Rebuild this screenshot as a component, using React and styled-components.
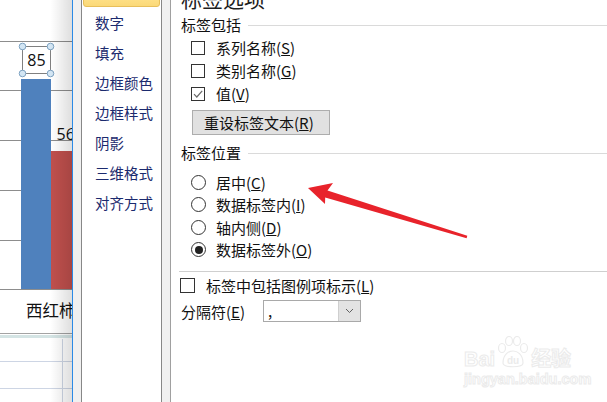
import React from "react";
import styled, { createGlobalStyle } from "styled-components";

const GlobalStyle = createGlobalStyle`
  html, body {
    margin: 0;
    padding: 0;
    overflow: hidden;
    background: #ffffff;
  }
  body {
    font-family: "Noto Sans CJK SC", "Noto Sans", sans-serif;
  }
`;

const categories = ["数字", "填充", "边框颜色", "边框样式", "阴影", "三维格式", "对齐方式"];

const positions = [
  { text: "居中", key: "C", checked: false },
  { text: "数据标签内", key: "I", checked: false },
  { text: "轴内侧", key: "D", checked: false },
  { text: "数据标签外", key: "O", checked: true },
];

function Label({ text, hotkey }) {
  return (
    <span>
      {text}({<Hot>{hotkey}</Hot>})
    </span>
  );
}

function ChartDrawing() {
  const grid = [41.5, 90.5, 140.5, 190.5, 240.5];
  const handles = [
    [22.5, 46.5],
    [50.5, 46.5],
    [22.5, 73.5],
    [50.5, 73.5],
  ];
  return (
    <svg width="72" height="333" viewBox="0 0 72 333">
      {grid.map((y) => (
        <line key={y} x1="0" x2="72" y1={y} y2={y} stroke="#8d8d8d" strokeWidth="1" />
      ))}
      <rect x="21" y="79" width="30" height="210" fill="#4f81bd" />
      <rect x="51" y="151" width="21" height="138" fill="#c0504d" />
      <line x1="0" x2="72" y1="289.5" y2="289.5" stroke="#8d8d8d" strokeWidth="1" />
      <rect x="22.5" y="46.5" width="28" height="27" fill="#ffffff" stroke="#808080" />
      <text x="36.5" y="66" textAnchor="middle" fontSize="16" fontFamily="Open Sans, sans-serif" fill="#111">
        85
      </text>
      {handles.map(([cx, cy]) => (
        <circle key={cx + "-" + cy} cx={cx} cy={cy} r="3.3" fill="#d3e6f4" stroke="#7ea3c2" strokeWidth="1" />
      ))}
      <text x="56.5" y="140" fontSize="16" fontFamily="Open Sans, sans-serif" fill="#111">
        56
      </text>
      <text x="26" y="317" fontSize="16.5" fontFamily="Noto Sans CJK SC, sans-serif" fill="#111">
        西红柿
      </text>
    </svg>
  );
}

export default function App() {
  return (
    <>
      <GlobalStyle />
      <Page>
        <ChartColumn>
          <ChartDrawing />
          <Sheet />
        </ChartColumn>
        <DialogEdge />
        <Gutter />
        <CategoryList>
          <Category $selected />
          {categories.map((c) => (
            <Category key={c}>{c}</Category>
          ))}
        </CategoryList>
        <Gutter />
        <OptionsPanel>
          <Title>标签选项</Title>

          <Heading $top={5}>标签包括</Heading>
          <CheckRow $top={1}>
            <Box />
            <Label text="系列名称" hotkey="S" />
          </CheckRow>
          <CheckRow>
            <Box />
            <Label text="类别名称" hotkey="G" />
          </CheckRow>
          <CheckRow>
            <Box>
              <svg width="12" height="12" viewBox="0 0 12 12">
                <path d="M2 6.2 L4.8 9 L10.2 2.8" fill="none" stroke="#6b6b6b" strokeWidth="1.2" />
              </svg>
            </Box>
            <Label text="值" hotkey="V" />
          </CheckRow>
          <ResetButton>
            <Label text="重设标签文本" hotkey="R" />
          </ResetButton>

          <Heading $top={8}>标签位置</Heading>
          <RadioGroup>
            {positions.map((p) => (
              <RadioRow key={p.key}>
                <Radio $checked={p.checked} />
                <Label text={p.text} hotkey={p.key} />
              </RadioRow>
            ))}
          </RadioGroup>

          <Divider />
          <LegendRow>
            <Box />
            <Label text="标签中包括图例项标示" hotkey="L" />
          </LegendRow>
          <SeparatorRow>
            <FieldLabel>
              <Label text="分隔符" hotkey="E" />
            </FieldLabel>
            <Select>
              <SelectValue>,</SelectValue>
              <SelectButton>
                <svg width="9" height="6" viewBox="0 0 9 6">
                  <path d="M1 1 L4.5 4.5 L8 1" fill="none" stroke="#606060" strokeWidth="1" />
                </svg>
              </SelectButton>
            </Select>
          </SeparatorRow>
        </OptionsPanel>

        <Arrow width="607" height="402" viewBox="0 0 607 402">
          <polygon
            points="308,188 333,183 327.5,190.5 467.3,235.8 466.6,238.3 325.2,197.6 325,204"
            fill="#e8232b"
          />
        </Arrow>

        <Watermark>
          <BrandLine>
            <span>Bai</span>
            <Paw>
              <svg width="36" height="34" viewBox="0 0 36 34">
                <g fill="#ffffff" stroke="#ebebeb" strokeWidth="1.2">
                  <ellipse cx="7" cy="12" rx="3.5" ry="4.5" />
                  <ellipse cx="14" cy="5" rx="3.5" ry="4.5" />
                  <ellipse cx="22" cy="5" rx="3.5" ry="4.5" />
                  <ellipse cx="29" cy="12" rx="3.5" ry="4.5" />
                  <path d="M8 27 C8 18 14 15 18 15 C22 15 28 18 28 27 C28 32 8 32 8 27 Z" />
                </g>
                <text x="18" y="28" textAnchor="middle" fontSize="10" fontFamily="Liberation Sans, sans-serif" fill="#ebebeb">
                  du
                </text>
              </svg>
            </Paw>
            <span>经验</span>
          </BrandLine>
          <SiteLine>jingyan.baidu.com</SiteLine>
        </Watermark>
      </Page>
    </>
  );
}

const Page = styled.div`
  position: relative;
  display: flex;
  width: 607px;
  height: 402px;
  overflow: hidden;
  background: #f0f0f0;
`;

const ChartColumn = styled.div`
  position: relative;
  width: 72px;
  display: flex;
  flex-direction: column;
  background: #ffffff;

  svg {
    display: block;
  }

  &::after {
    content: "";
    position: absolute;
    inset: 0;
    background: linear-gradient(to right, rgba(0, 0, 0, 0) 70%, rgba(0, 0, 0, 0.13) 100%);
    pointer-events: none;
  }
`;

const Sheet = styled.div`
  flex: 1;
  border-top: 1px solid #a3a3a3;
  background:
    linear-gradient(#d4e4e4, #d4e4e4) 0 1px / 100% 3px no-repeat,
    linear-gradient(#cdd5e4, #cdd5e4) 0 27px / 100% 1px no-repeat,
    linear-gradient(#cdd5e4, #cdd5e4) 0 54px / 100% 1px no-repeat,
    linear-gradient(#cdd5e4, #cdd5e4) 62px 5px / 1px 100% no-repeat,
    #ffffff;
`;

const DialogEdge = styled.div`
  width: 1px;
  background: #2a8ae6;
`;

const Gutter = styled.div`
  width: 8px;
  background: #f0f0f0;
`;

const CategoryList = styled.div`
  width: 79px;
  display: flex;
  flex-direction: column;
  background: #ffffff;
  border-left: 1px solid #878787;
  border-right: 1px solid #878787;
  overflow: hidden;
`;

const Category = styled.div`
  flex: none;
  height: ${(p) => (p.$selected ? "29px" : "30px")};
  margin: ${(p) => (p.$selected ? "-22px 1px 1px" : "0")};
  padding-left: 13px;
  line-height: 30px;
  font-size: 14.5px;
  color: #1b2a6e;
  white-space: nowrap;
  box-sizing: border-box;
  border-radius: ${(p) => (p.$selected ? "0 0 3px 3px" : "0")};
  border: ${(p) => (p.$selected ? "1px solid #e8bf5a" : "none")};
  background: ${(p) =>
    p.$selected ? "linear-gradient(to bottom, #fff3c4 0%, #ffe38e 60%, #fbd978 100%)" : "transparent"};
`;

const OptionsPanel = styled.div`
  flex: 1;
  display: flex;
  flex-direction: column;
  background: #ffffff;
  border-left: 1px solid #a0a0a0;
  padding-left: 8px;
  font-size: 15px;
  color: #111111;
  white-space: nowrap;
`;

const Hot = styled.span`
  text-decoration: underline;
  text-underline-offset: 1px;
`;

const Title = styled.div`
  margin-top: -14px;
  height: 24px;
  line-height: 24px;
  padding-left: 2px;
  font-size: 21px;
  color: #1e1e1e;
`;

const Heading = styled.div`
  margin-top: ${(p) => p.$top}px;
  height: 20px;
  display: flex;
  align-items: center;
  gap: 7px;
  padding-left: 2px;
  line-height: 20px;

  &::after {
    content: "";
    flex: 1;
    height: 1px;
    background: #dadada;
  }
`;

const CheckRow = styled.div`
  margin-top: ${(p) => p.$top || 0}px;
  height: 23px;
  display: flex;
  align-items: center;
  gap: 11px;
  padding-left: 12px;
`;

const Box = styled.span`
  width: 14px;
  height: 14px;
  flex: none;
  box-sizing: border-box;
  border: 1px solid #333333;
  background: #ffffff;
  display: flex;
  align-items: center;
  justify-content: center;
`;

const ResetButton = styled.button`
  margin: 5px 0 0 13px;
  width: 138px;
  height: 25px;
  padding: 0 0 0 11px;
  text-align: left;
  font: inherit;
  color: #111111;
  background: #e1e1e1;
  border: 1px solid #adadad;
  border-radius: 0;
`;

const RadioGroup = styled.div`
  margin-top: 8px;
  display: flex;
  flex-direction: column;
`;

const RadioRow = styled.div`
  height: 22.5px;
  display: flex;
  align-items: center;
  gap: 10px;
  padding-left: 12px;
`;

const Radio = styled.span`
  width: 15px;
  height: 15px;
  flex: none;
  box-sizing: border-box;
  border: 1px solid #333333;
  border-radius: 50%;
  background: #ffffff;
  display: flex;
  align-items: center;
  justify-content: center;

  &::after {
    content: "";
    width: 8px;
    height: 8px;
    border-radius: 50%;
    background: ${(p) => (p.$checked ? "#222222" : "transparent")};
  }
`;

const Divider = styled.div`
  margin-top: 10px;
  height: 1px;
  background: #cfcfcf;
`;

const LegendRow = styled.div`
  margin-top: 3px;
  height: 20px;
  display: flex;
  align-items: center;
  gap: 11px;
  padding-left: 1px;

  ${Box} {
    width: 15px;
    height: 15px;
  }
`;

const SeparatorRow = styled.div`
  margin-top: 5px;
  height: 22px;
  display: flex;
  align-items: center;
`;

const FieldLabel = styled.div`
  width: 84px;
  padding-left: 2px;
  box-sizing: border-box;
`;

const Select = styled.div`
  width: 98px;
  height: 22px;
  box-sizing: border-box;
  display: flex;
  border: 1px solid #a9a9a9;
  background: #ffffff;
`;

const SelectValue = styled.div`
  flex: 1;
  padding-left: 4px;
  line-height: 20px;
  font-size: 15px;
`;

const SelectButton = styled.div`
  width: 21px;
  display: flex;
  align-items: center;
  justify-content: center;
  background: #e3e3e3;
  border-left: 1px solid #cfcfcf;
`;

const Arrow = styled.svg`
  position: absolute;
  left: 0;
  top: 0;
  pointer-events: none;
`;

const Watermark = styled.div`
  position: absolute;
  left: 464px;
  top: 336px;
  display: flex;
  flex-direction: column;
  align-items: flex-start;
  color: #ffffff;
  -webkit-text-stroke: 1px #ebebeb;
  font-family: "Liberation Sans", "Noto Sans CJK SC", sans-serif;
  pointer-events: none;
`;

const BrandLine = styled.div`
  display: flex;
  align-items: flex-end;
  font-size: 20px;
  font-weight: bold;
  line-height: 22px;
  height: 34px;
`;

const Paw = styled.span`
  display: flex;
  -webkit-text-stroke: 0;
`;

const SiteLine = styled.div`
  margin-top: 1px;
  font-size: 14.5px;
  font-weight: bold;
  line-height: 16px;
`;
